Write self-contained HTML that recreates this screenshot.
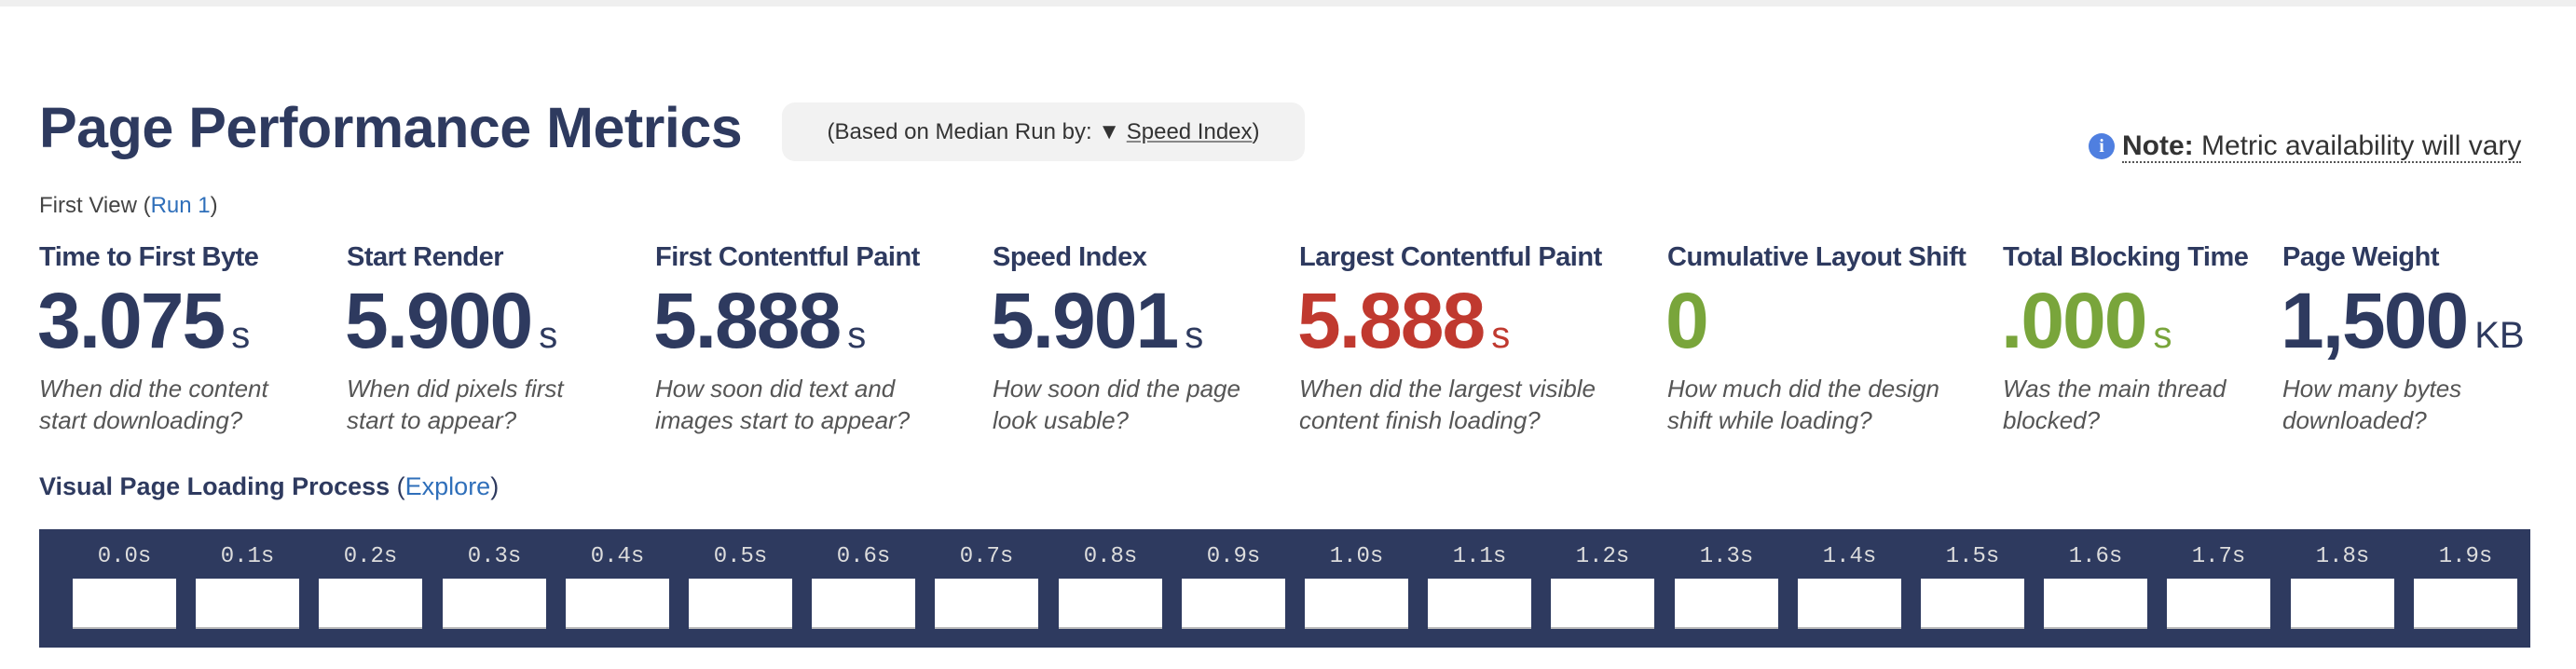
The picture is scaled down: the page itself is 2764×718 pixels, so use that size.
<!DOCTYPE html>
<html><head><meta charset="utf-8"><style>
body{margin:0;width:2764px;height:718px;background:#fff;position:relative;overflow:hidden;font-family:"Liberation Sans",sans-serif;}
.top{position:absolute;left:0;top:0;width:2764px;height:7px;background:#efefef;}
h1{position:absolute;left:42px;top:102px;margin:0;font-size:61px;font-weight:bold;color:#2e3a5f;letter-spacing:-0.5px;}
.pill{position:absolute;left:839px;top:110px;width:561px;height:63px;background:#f2f2f2;border-radius:14px;font-size:24px;color:#333;line-height:63px;text-align:center;}
.pill u{text-decoration:underline;text-decoration-color:#888;}
.note{position:absolute;left:2241px;top:140px;font-size:30px;color:#333;white-space:nowrap;}
.note .i{display:inline-block;width:28px;height:28px;border-radius:50%;background:#4f7fe0;color:#fff;font-size:20px;font-weight:bold;text-align:center;line-height:28px;vertical-align:3px;margin-right:8px;font-family:"Liberation Serif",serif;}
.note span.t{border-bottom:2px dotted #555;}
.fv{position:absolute;left:42px;top:207px;font-size:24px;color:#444;}
.fv a{color:#2f6fba;text-decoration:none;}
.lbl{position:absolute;top:260px;font-size:29px;font-weight:bold;color:#2e3a5f;letter-spacing:-0.5px;white-space:nowrap;}
.val{position:absolute;top:296px;font-size:84px;font-weight:bold;color:#2e3a5f;letter-spacing:-2px;line-height:96px;white-space:nowrap;}
.val small{font-size:40px;font-weight:normal;letter-spacing:0;margin-left:8px;}
.d{position:absolute;top:400px;font-size:26px;font-style:italic;color:#555;line-height:34px;white-space:nowrap;}
.vp{position:absolute;left:42px;top:507px;font-size:27px;font-weight:bold;color:#2e3a5f;}
.vp span{font-weight:normal;color:#2e3a5f;}
.vp a{font-weight:normal;color:#2f6fba;}
.fs{position:absolute;left:42px;top:568px;width:2673px;height:127px;background:#2e3a5f;}
.fr{position:absolute;top:0;width:111px;}
.fr .l{position:absolute;top:16px;width:111px;text-align:center;font-family:"Liberation Mono",monospace;font-size:24px;color:#ddd;}
.fr .b{position:absolute;top:53px;left:0;width:111px;height:54px;background:#fff;border-bottom:2px solid #bbb;box-sizing:border-box;}
</style></head><body>
<div class="top"></div>
<h1>Page Performance Metrics</h1>
<div class="pill">(Based on Median Run by: ▼ <u>Speed Index</u>)</div>
<div class="note"><span class="i">i</span><span class="t"><b>Note:</b> Metric availability will vary</span></div>
<div class="fv">First View (<a>Run 1</a>)</div>

<div class="lbl" style="left:42px">Time to First Byte</div>
<div class="lbl" style="left:372px">Start Render</div>
<div class="lbl" style="left:703px">First Contentful Paint</div>
<div class="lbl" style="left:1065px">Speed Index</div>
<div class="lbl" style="left:1394px">Largest Contentful Paint</div>
<div class="lbl" style="left:1789px">Cumulative Layout Shift</div>
<div class="lbl" style="left:2149px">Total Blocking Time</div>
<div class="lbl" style="left:2449px">Page Weight</div>

<div class="val" style="left:40px">3.075<small>s</small></div>
<div class="val" style="left:370px">5.900<small>s</small></div>
<div class="val" style="left:701px">5.888<small>s</small></div>
<div class="val" style="left:1063px">5.901<small>s</small></div>
<div class="val" style="left:1392px;color:#c0392f">5.888<small>s</small></div>
<div class="val" style="left:1787px;color:#79a53b">0</div>
<div class="val" style="left:2147px;color:#79a53b">.000<small>s</small></div>
<div class="val" style="left:2447px">1,500<small>KB</small></div>

<div class="d" style="left:42px">When did the content<br>start downloading?</div>
<div class="d" style="left:372px">When did pixels first<br>start to appear?</div>
<div class="d" style="left:703px">How soon did text and<br>images start to appear?</div>
<div class="d" style="left:1065px">How soon did the page<br>look usable?</div>
<div class="d" style="left:1394px">When did the largest visible<br>content finish loading?</div>
<div class="d" style="left:1789px">How much did the design<br>shift while loading?</div>
<div class="d" style="left:2149px">Was the main thread<br>blocked?</div>
<div class="d" style="left:2449px">How many bytes<br>downloaded?</div>

<div class="vp">Visual Page Loading Process <span>(<a>Explore</a>)</span></div>
<div class="fs">
<div class="fr" style="left:36px"><div class="l">0.0s</div><div class="b"></div></div>
<div class="fr" style="left:168px"><div class="l">0.1s</div><div class="b"></div></div>
<div class="fr" style="left:300px"><div class="l">0.2s</div><div class="b"></div></div>
<div class="fr" style="left:433px"><div class="l">0.3s</div><div class="b"></div></div>
<div class="fr" style="left:565px"><div class="l">0.4s</div><div class="b"></div></div>
<div class="fr" style="left:697px"><div class="l">0.5s</div><div class="b"></div></div>
<div class="fr" style="left:829px"><div class="l">0.6s</div><div class="b"></div></div>
<div class="fr" style="left:961px"><div class="l">0.7s</div><div class="b"></div></div>
<div class="fr" style="left:1094px"><div class="l">0.8s</div><div class="b"></div></div>
<div class="fr" style="left:1226px"><div class="l">0.9s</div><div class="b"></div></div>
<div class="fr" style="left:1358px"><div class="l">1.0s</div><div class="b"></div></div>
<div class="fr" style="left:1490px"><div class="l">1.1s</div><div class="b"></div></div>
<div class="fr" style="left:1622px"><div class="l">1.2s</div><div class="b"></div></div>
<div class="fr" style="left:1755px"><div class="l">1.3s</div><div class="b"></div></div>
<div class="fr" style="left:1887px"><div class="l">1.4s</div><div class="b"></div></div>
<div class="fr" style="left:2019px"><div class="l">1.5s</div><div class="b"></div></div>
<div class="fr" style="left:2151px"><div class="l">1.6s</div><div class="b"></div></div>
<div class="fr" style="left:2283px"><div class="l">1.7s</div><div class="b"></div></div>
<div class="fr" style="left:2416px"><div class="l">1.8s</div><div class="b"></div></div>
<div class="fr" style="left:2548px"><div class="l">1.9s</div><div class="b"></div></div>
</div>
</body></html>
